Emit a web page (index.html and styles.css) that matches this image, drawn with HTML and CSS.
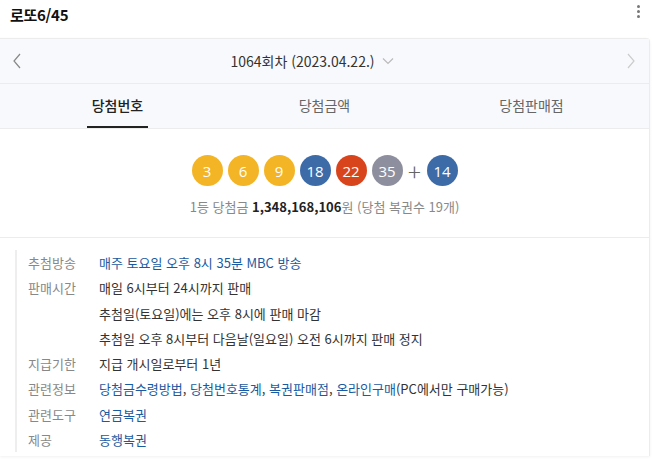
FILE: index.html
```html
<!DOCTYPE html>
<html lang="ko">
<head>
<meta charset="utf-8">
<link rel="stylesheet" href="styles.css">
</head>
<body>
<div class="top">
  <h1 class="title">로또6/45</h1>
  <span class="kebab"><i></i><i></i><i></i></span>
</div>
<div class="card">
  <div class="head">
    <div class="nav">
      <svg class="arrow" width="10" height="16" viewBox="0 0 10 16"><path d="M8 1 L2 8 L8 15" fill="none" stroke="#888" stroke-width="1.2"/></svg>
      <div class="round">1064회차 (2023.04.22.)<svg class="down" width="12" height="8" viewBox="0 0 12 8"><path d="M1 1.5 L6 6.5 L11 1.5" fill="none" stroke="#bbb" stroke-width="1.2"/></svg></div>
      <svg class="arrow" width="10" height="16" viewBox="0 0 10 16"><path d="M2 1 L8 8 L2 15" fill="none" stroke="#ccc" stroke-width="1.2"/></svg>
    </div>
    <div class="tabs">
      <div class="tab on"><span>당첨번호</span></div>
      <div class="tab"><span>당첨금액</span></div>
      <div class="tab"><span>당첨판매점</span></div>
    </div>
  </div>
  <div class="result">
    <div class="balls">
      <span class="ball y">3</span>
      <span class="ball y">6</span>
      <span class="ball y">9</span>
      <span class="ball b">18</span>
      <span class="ball r">22</span>
      <span class="ball g">35</span>
      <span class="plus">+</span>
      <span class="ball b">14</span>
    </div>
    <p class="prize">1등 당첨금 <strong>1,348,168,106</strong>원 (당첨 복권수 19개)</p>
  </div>
  <dl class="info">
    <div class="row"><dt>추첨방송</dt><dd><a>매주 토요일 오후 8시 35분 MBC 방송</a></dd></div>
    <div class="row"><dt>판매시간</dt><dd>매일 6시부터 24시까지 판매<br>추첨일(토요일)에는 오후 8시에 판매 마감<br>추첨일 오후 8시부터 다음날(일요일) 오전 6시까지 판매 정지</dd></div>
    <div class="row"><dt>지급기한</dt><dd>지급 개시일로부터 1년</dd></div>
    <div class="row"><dt>관련정보</dt><dd><a>당첨금수령방법</a>, <a>당첨번호통계</a>, <a>복권판매점</a>, <a>온라인구매</a>(PC에서만 구매가능)</dd></div>
    <div class="row"><dt>관련도구</dt><dd><a>연금복권</a></dd></div>
    <div class="row"><dt>제공</dt><dd><a>동행복권</a></dd></div>
  </dl>
</div>
</body>
</html>
```
FILE: styles.css
```css
html, body {
  margin: 0;
  padding: 0;
  background: #fff;
}
body {
  width: 652px;
  height: 460px;
  overflow: hidden;
  font-family: "Noto Sans CJK KR", "Noto Sans", sans-serif;
  color: #333;
  font-size: 13px;
}
.top {
  height: 38px;
  display: flex;
  align-items: flex-start;
  justify-content: space-between;
  padding: 0 12px 0 10px;
}
.title {
  margin: 4px 0 0;
  font-size: 15px;
  font-weight: 700;
  line-height: 22px;
  color: #111;
  letter-spacing: -0.3px;
}
.kebab {
  display: flex;
  flex-direction: column;
  gap: 2px;
  padding-top: 5px;
}
.kebab i {
  width: 3px;
  height: 3px;
  border-radius: 50%;
  background: #777;
}
.card {
  width: 649px;
  border: 1px solid #ececec;
  border-left: 0;
  border-bottom: 0;
  box-shadow: 0 1px 3px rgba(0,0,0,0.06);
  border-radius: 0 4px 0 0;
  background: #fff;
  padding-bottom: 4px;
}
.head {
  background: #f8f9fc;
  border-bottom: 1px solid #ececec;
}
.nav {
  height: 44px;
  display: flex;
  align-items: center;
  justify-content: space-between;
  padding: 0 13px 0 12px;
  border-bottom: 1px solid #ececec;
}
.round {
  display: flex;
  align-items: center;
  gap: 7px;
  font-size: 14px;
  color: #333;
  margin-right: 24px;
}
.tabs {
  display: grid;
  grid-template-columns: repeat(3, 1fr);
  padding: 0 14px;
  height: 44px;
}
.tab {
  display: flex;
  justify-content: center;
}
.tab span {
  display: flex;
  align-items: center;
  height: 42px;
  padding: 0 5px;
  font-size: 14px;
  color: #666;
  border-bottom: 2px solid transparent;
}
.tab.on span {
  color: #222;
  font-weight: 500;
  border-bottom-color: #222;
}
.result {
  padding: 26px 0 21px;
  border-bottom: 1px solid #ececec;
}
.balls {
  display: flex;
  justify-content: center;
  align-items: center;
  gap: 5px;
}
.ball {
  width: 31px;
  height: 31px;
  border-radius: 50%;
  display: flex;
  align-items: center;
  justify-content: center;
  color: #fff;
  font-size: 15px;
  font-family: "Open Sans", "Noto Sans", sans-serif;
}
.ball.y { background: #f3b425; }
.ball.b { background: #3d6ba8; }
.ball.r { background: #d8441c; }
.ball.g { background: #8e8f9e; }
.plus {
  font-size: 24px;
  line-height: 24px;
  color: #666;
  width: 14px;
  text-align: center;
  font-weight: 300;
}
.prize {
  margin: 12px 0 0;
  text-align: center;
  color: #888;
  font-size: 13px;
  line-height: 18px;
}
.prize strong {
  color: #222;
  font-weight: 700;
}
.info {
  margin: 12px 0 0 15px;
  padding: 0 0 0 11px;
  border-left: 2px solid #eeeeee;
}
.row {
  display: flex;
  line-height: 25.3px;
}
.row dt {
  width: 71px;
  flex: none;
  color: #888;
}
.row dd {
  margin: 0;
  color: #333;
}
.row a {
  color: #1a5aa0;
}
```
